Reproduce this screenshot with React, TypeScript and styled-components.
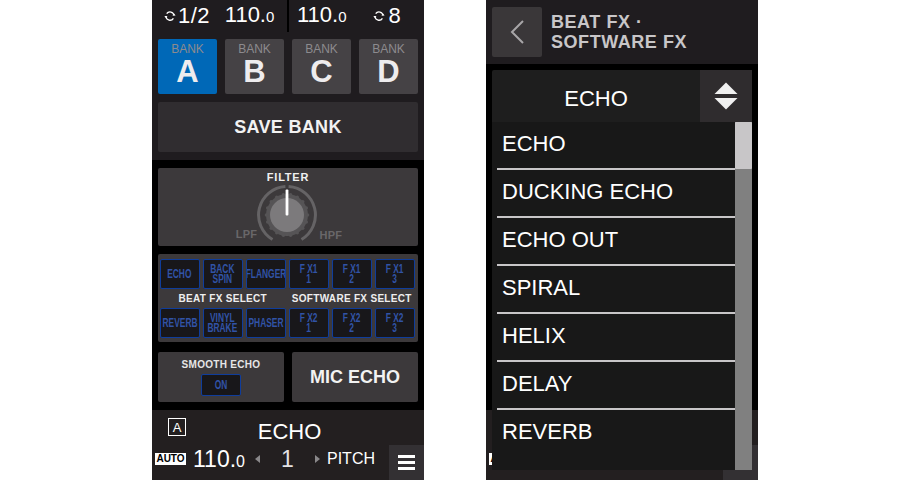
import React from 'react'
import styled, { createGlobalStyle } from 'styled-components'

const GlobalStyle = createGlobalStyle`
  html, body { margin: 0; padding: 0; background: #fff; }
  body { font-family: "Liberation Sans", Arial, sans-serif; }
`

const Page = styled.div`
  width: 900px;
  height: 480px;
  display: flex;
  justify-content: flex-start;
  gap: 62px;
  padding-left: 152px;
  box-sizing: border-box;
  overflow: hidden;
`

const Panel = styled.div`
  position: relative;
  width: 272px;
  height: 480px;
  background: #000;
  display: flex;
  flex-direction: column;
`

const TopSection = styled.div`
  background: #1f1c1f;
  height: 160px;
  flex: none;
`

const StatusBar = styled.div`
  height: 31px;
  display: grid;
  grid-template-columns: 135px 2px 135px;
  color: #fff;
  font-size: 22px;
`

const StatusSide = styled.div<{ $pad: string }>`
  display: flex;
  align-items: center;
  padding: ${({ $pad }) => $pad};
  line-height: 30px;
`

const StatusDivider = styled.div`
  background: #000;
`

const LoopGroup = styled.span<{ $before: number; $after: number; $gap: number }>`
  display: flex;
  align-items: center;
  gap: ${({ $gap }) => $gap}px;
  margin-left: ${({ $before }) => $before}px;
  margin-right: ${({ $after }) => $after}px;
  letter-spacing: 0.4px;
`

const Small = styled.span`
  font-size: 15px;
`

const BankRow = styled.div`
  display: grid;
  grid-template-columns: repeat(4, 59px);
  gap: 8px;
  padding: 8px 6px 0;
`

const BankButton = styled.div<{ $active?: boolean }>`
  height: 55px;
  background: ${({ $active }) => ($active ? '#0068b7' : '#454245')};
  border-radius: 2px;
  display: flex;
  flex-direction: column;
  align-items: center;
  color: #eeecee;
`

const BankLabel = styled.div`
  font-size: 12px;
  line-height: 12px;
  margin-top: 4px;
  color: #8d8b8e;
`

const BankLetter = styled.div`
  font-size: 31px;
  line-height: 31px;
  font-weight: 700;
  margin-top: 1px;
`

const SaveBank = styled.div`
  margin: 8px 6px 0;
  height: 50px;
  background: #302d30;
  border-radius: 2px;
  display: flex;
  align-items: center;
  justify-content: center;
  color: #f2f2f2;
  font-size: 18px;
  font-weight: 700;
  letter-spacing: 0.3px;
`

const MiddleSection = styled.div`
  flex: 1;
  display: flex;
  flex-direction: column;
  gap: 8px;
  padding: 8px 6px;
  min-height: 0;
`

const FilterPanel = styled.div`
  height: 78px;
  background: #3c393b;
  border-radius: 2px;
  display: flex;
  flex-direction: column;
  align-items: center;
`

const FilterTitle = styled.div`
  color: #f0f0f0;
  font-size: 11px;
  line-height: 12px;
  font-weight: 700;
  letter-spacing: 0.8px;
  margin-top: 3px;
`

const KnobRow = styled.div`
  display: flex;
  align-items: flex-end;
  margin-top: 1px;
  margin-left: 2px;
`

const RangeLabel = styled.div<{ $side: 'l' | 'r' }>`
  color: #696769;
  font-size: 11px;
  line-height: 12px;
  font-weight: 700;
  letter-spacing: 0.3px;
  margin: ${({ $side }) => ($side === 'l' ? '0 -1px 4px 0' : '0 0 3px 1px')};
`

const FxPanel = styled.div`
  height: 89px;
  background: #3c393b;
  border-radius: 2px;
  padding: 5px 2px 0;
  box-sizing: border-box;
  display: grid;
  grid-template-columns: repeat(6, 39.5px);
  grid-template-rows: 30px 19px 30px;
  column-gap: 3.5px;
`

const FxButton = styled.div`
  background: #18171a;
  border: 1px solid #0f3d9c;
  border-radius: 2px;
  box-sizing: border-box;
  display: flex;
  align-items: center;
  justify-content: center;
  text-align: center;
  color: #3153a6;
  overflow: hidden;
`

// the panel's lettering is a condensed bold, squeezed here from the Arial-width face
const FxText = styled.span`
  display: block;
  flex: none;
  font-size: 12px;
  line-height: 10px;
  font-weight: 700;
  white-space: pre-line;
  transform: scaleX(0.7);
`

const FxCaption = styled.div<{ $span: number }>`
  grid-column: span ${({ $span }) => $span};
  display: flex;
  align-items: center;
  justify-content: center;
  color: #eeeeee;
  font-size: 10px;
  font-weight: 700;
  letter-spacing: 0.3px;
  white-space: nowrap;
`

const BottomRow = styled.div`
  display: grid;
  grid-template-columns: 126px 126px;
  gap: 8px;
  margin-top: 2px;
  height: 50px;
`

const SmoothEcho = styled.div`
  background: #3c393b;
  border-radius: 2px;
  display: flex;
  flex-direction: column;
  align-items: center;
`

const SmoothLabel = styled.div`
  color: #e6e6e6;
  font-size: 10px;
  line-height: 11px;
  font-weight: 700;
  letter-spacing: 0.3px;
  margin-top: 7px;
`

const OnButton = styled(FxButton)`
  width: 40px;
  height: 22px;
  margin-top: 4px;
`

const MicEcho = styled.div`
  background: #3c393b;
  border-radius: 2px;
  display: flex;
  align-items: center;
  justify-content: center;
  color: #f2f2f2;
  font-size: 18px;
  font-weight: 700;
`

const DeckBar = styled.div`
  flex: none;
  height: 70px;
  background: #231f20;
  margin-top: auto;
  display: flex;
  flex-direction: column;
`

const DeckTop = styled.div`
  height: 35px;
  display: flex;
  align-items: center;
  padding-left: 16px;
`

const DeckLetter = styled.div`
  width: 18px;
  height: 18px;
  box-sizing: border-box;
  border: 1px solid #fff;
  color: #fff;
  font-size: 13px;
  display: flex;
  align-items: center;
  justify-content: center;
  margin-top: -1px;
`

const DeckTitle = styled.div`
  flex: 1;
  text-align: center;
  color: #fff;
  font-size: 22px;
  line-height: 26px;
  margin-left: -1px;
  padding-right: 30px;
  padding-top: 9px;
`

const DeckBottom = styled.div`
  flex: 1;
  display: flex;
  align-items: flex-start;
  justify-content: space-between;
  color: #fff;
  padding-left: 3px;
`

const DeckInfo = styled.div`
  display: flex;
  align-items: center;
  height: 28px;
`

const AutoBadge = styled.div`
  width: 31px;
  height: 12px;
  background: #fff;
  color: #000;
  font-size: 10px;
  font-weight: 700;
  line-height: 12px;
  text-align: center;
  flex: none;
`

const Tempo = styled.div`
  margin-left: 7px;
  font-size: 23px;
  width: 62px;
  flex: none;
`

const TempoSmall = styled.span`
  font-size: 16px;
`

const Arrow = styled.div<{ $dir: 'l' | 'r' }>`
  width: 0;
  height: 0;
  flex: none;
  border-top: 4px solid transparent;
  border-bottom: 4px solid transparent;
  ${({ $dir }) =>
    $dir === 'l' ? 'border-right: 5px solid #8a888a;' : 'border-left: 5px solid #8a888a;'}
`

const PitchValue = styled.div`
  width: 55px;
  text-align: center;
  font-size: 23px;
  color: #e4e2e4;
  flex: none;
`

const PitchLabel = styled.div`
  margin-left: 7px;
  font-size: 16px;
  flex: none;
`

const MenuButton = styled.div`
  width: 35px;
  height: 35px;
  background: #333033;
  display: flex;
  flex-direction: column;
  justify-content: center;
  align-items: center;
  gap: 3px;
  flex: none;
`

const MenuLine = styled.div`
  width: 17px;
  height: 3px;
  background: #fff;
`

const Header = styled.div`
  height: 64px;
  background: #1f1c1f;
  display: flex;
  align-items: center;
  padding-left: 6px;
  flex: none;
`

const BackButton = styled.div`
  width: 50px;
  height: 50px;
  background: #3a3739;
  border-radius: 2px;
  display: flex;
  align-items: center;
  justify-content: center;
  flex: none;
`

const HeaderTitle = styled.div`
  margin-left: 9px;
  color: #c8c6c8;
  font-size: 18px;
  line-height: 20px;
  font-weight: 700;
  letter-spacing: 0.55px;
`

const Menu = styled.div`
  position: absolute;
  left: 6px;
  top: 70px;
  width: 260px;
  height: 400px;
  display: flex;
  flex-direction: column;
`

const MenuHead = styled.div`
  height: 52px;
  background: #1e1e1e;
  display: flex;
  align-items: center;
  flex: none;
  border-radius: 2px 2px 0 0;
`

const MenuHeadText = styled.div`
  flex: 1;
  text-align: center;
  color: #fff;
  font-size: 22px;
  padding-top: 5px;
`

const SortButton = styled.div`
  width: 52px;
  height: 52px;
  background: #2f2c2e;
  display: flex;
  align-items: center;
  justify-content: center;
  flex: none;
`

const MenuBody = styled.div`
  flex: 1;
  display: flex;
  background: #181818;
  min-height: 0;
`

const ItemList = styled.div`
  flex: 1;
  padding-left: 5px;
`

const Item = styled.div<{ $last?: boolean }>`
  height: 48px;
  box-sizing: border-box;
  display: flex;
  align-items: center;
  padding: 0 0 2px 5px;
  color: #fff;
  font-size: 22px;
  border-bottom: 2px solid ${({ $last }) => ($last ? 'transparent' : '#c8c6c8')};
`

const ScrollTrack = styled.div`
  width: 17px;
  background: #808080;
  flex: none;
`

const ScrollThumb = styled.div`
  height: 47px;
  background: #c8c6c8;
  border-radius: 1px;
`

const LoopIcon = () => (
  <svg width="12" height="12" viewBox="0 0 12 12" fill="none">
    <path d="M2 6.5a4 4 0 0 0 7.4 1.8M10 5.5A4 4 0 0 0 2.7 3.7" stroke="#fff" strokeWidth="1.3" />
    <path d="M0.3 6l3.2 0L1.9 8z" fill="#fff" />
    <path d="M8.4 5.6l3.2 0L10 3.6z" fill="#fff" />
  </svg>
)

const Knob = () => {
  const teeth = Array.from({ length: 18 }, (_, i) => {
    const a = (i * Math.PI) / 9
    return (
      <circle key={i} cx={31 + 20.6 * Math.cos(a)} cy={31 + 20.6 * Math.sin(a)} r="1.7" fill="#565456" />
    )
  })
  return (
    <svg width="62" height="60" viewBox="0 0 62 60">
      <path
        d="M16.5 55.5 A28.5 28.5 0 0 1 29.4 2.55 M32.6 2.55 A28.5 28.5 0 0 1 45.5 55.5"
        fill="none"
        stroke="#656365"
        strokeWidth="3"
      />
      <circle cx="31" cy="31" r="21" fill="#565456" />
      {teeth}
      <circle cx="31" cy="31" r="17" fill="#7c7a7c" />
      <rect x="29.6" y="5.5" width="2.8" height="26" rx="1" fill="#fff" />
    </svg>
  )
}

const SortIcon = () => (
  <svg width="24" height="28" viewBox="0 0 24 28">
    <path d="M12 0.5L23.5 12H0.5z" fill="#f0f0f0" />
    <path d="M12 27.5L23.5 16H0.5z" fill="#f0f0f0" />
  </svg>
)

const BackIcon = () => (
  <svg width="16" height="26" viewBox="0 0 16 26" fill="none">
    <path d="M14 2L3 13l11 11" stroke="#a8a6a8" strokeWidth="2" />
  </svg>
)

const banks = ['A', 'B', 'C', 'D']
const rowOne = ['ECHO', 'BACK\nSPIN', 'FLANGER', 'F X1\n1', 'F X1\n2', 'F X1\n3']
const rowTwo = ['REVERB', 'VINYL\nBRAKE', 'PHASER', 'F X2\n1', 'F X2\n2', 'F X2\n3']
const items = ['ECHO', 'DUCKING ECHO', 'ECHO OUT', 'SPIRAL', 'HELIX', 'DELAY', 'REVERB']

const App: React.FC = () => (
  <>
    <GlobalStyle />
    <Page>
      <Panel>
        <TopSection>
          <StatusBar>
            <StatusSide $pad="0 0 0 12px">
              <LoopGroup $before={0} $after={15} $gap={2}>
                <LoopIcon />
                1/2
              </LoopGroup>
              <span>
                110.<Small>0</Small>
              </span>
            </StatusSide>
            <StatusDivider />
            <StatusSide $pad="0 0 0 8px">
              <span>
                110.<Small>0</Small>
              </span>
              <LoopGroup $before={26} $after={0} $gap={4}>
                <LoopIcon />
                8
              </LoopGroup>
            </StatusSide>
          </StatusBar>
          <BankRow>
            {banks.map((b) => (
              <BankButton key={b} $active={b === 'A'}>
                <BankLabel>BANK</BankLabel>
                <BankLetter>{b}</BankLetter>
              </BankButton>
            ))}
          </BankRow>
          <SaveBank>SAVE BANK</SaveBank>
        </TopSection>
        <MiddleSection>
          <FilterPanel>
            <FilterTitle>FILTER</FilterTitle>
            <KnobRow>
              <RangeLabel $side="l">LPF</RangeLabel>
              <Knob />
              <RangeLabel $side="r">HPF</RangeLabel>
            </KnobRow>
          </FilterPanel>
          <FxPanel>
            {rowOne.map((t) => (
              <FxButton key={t}>
                <FxText>{t}</FxText>
              </FxButton>
            ))}
            <FxCaption $span={3}>BEAT FX SELECT</FxCaption>
            <FxCaption $span={3}>SOFTWARE FX SELECT</FxCaption>
            {rowTwo.map((t) => (
              <FxButton key={t}>
                <FxText>{t}</FxText>
              </FxButton>
            ))}
          </FxPanel>
          <BottomRow>
            <SmoothEcho>
              <SmoothLabel>SMOOTH ECHO</SmoothLabel>
              <OnButton>
                <FxText>ON</FxText>
              </OnButton>
            </SmoothEcho>
            <MicEcho>MIC ECHO</MicEcho>
          </BottomRow>
        </MiddleSection>
        <DeckBar>
          <DeckTop>
            <DeckLetter>A</DeckLetter>
            <DeckTitle>ECHO</DeckTitle>
          </DeckTop>
          <DeckBottom>
            <DeckInfo>
              <AutoBadge>AUTO</AutoBadge>
              <Tempo>
                110.<TempoSmall>0</TempoSmall>
              </Tempo>
              <Arrow $dir="l" />
              <PitchValue>1</PitchValue>
              <Arrow $dir="r" />
              <PitchLabel>PITCH</PitchLabel>
            </DeckInfo>
            <MenuButton>
              <MenuLine />
              <MenuLine />
              <MenuLine />
            </MenuButton>
          </DeckBottom>
        </DeckBar>
      </Panel>
      <Panel>
        <Header>
          <BackButton>
            <BackIcon />
          </BackButton>
          <HeaderTitle>
            BEAT FX ·
            <br />
            SOFTWARE FX
          </HeaderTitle>
        </Header>
        <DeckBar>
          <DeckTop />
          <DeckBottom>
            <DeckInfo>
              <AutoBadge>AUTO</AutoBadge>
            </DeckInfo>
            <MenuButton />
          </DeckBottom>
        </DeckBar>
        <Menu>
          <MenuHead>
            <MenuHeadText>ECHO</MenuHeadText>
            <SortButton>
              <SortIcon />
            </SortButton>
          </MenuHead>
          <MenuBody>
            <ItemList>
              {items.map((t, i) => (
                <Item key={t} $last={i === items.length - 1}>
                  {t}
                </Item>
              ))}
            </ItemList>
            <ScrollTrack>
              <ScrollThumb />
            </ScrollTrack>
          </MenuBody>
        </Menu>
      </Panel>
    </Page>
  </>
)

export default App
